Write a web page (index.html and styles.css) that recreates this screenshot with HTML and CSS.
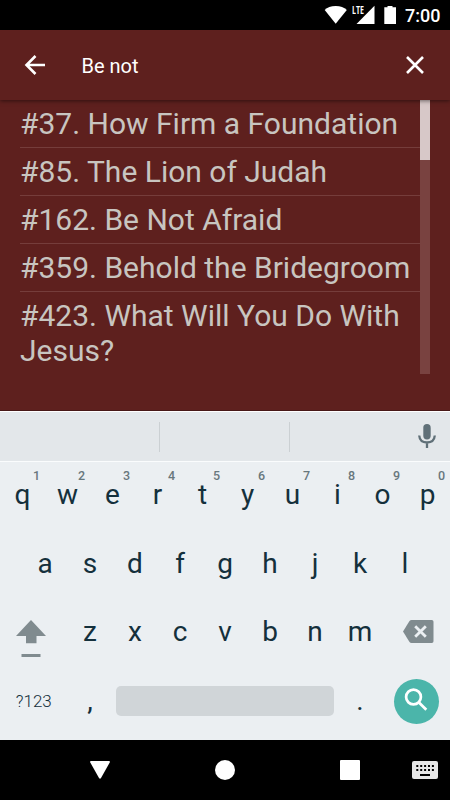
FILE: index.html
```html
<!DOCTYPE html>
<html lang="en">
<head>
<meta charset="utf-8">
<title>Hymn search</title>
<link rel="stylesheet" href="styles.css">
</head>
<body>
<div class="screen">
  <div class="status">
    <svg class="status-icons" viewBox="0 0 80 30" width="80" height="30">
      <path d="M4.700 10Q8.500 6 15.700 6Q22.800 6 26.800 10L15.700 23.700Z"/>
      <path d="M54.500 5.800V24H36.500Z"/>
      <path d="M67.500 7.300V6H72.500V7.300H76V24H64.300V7.300Z"/>
    </svg>
    <span class="lte">LTE</span>
    <span class="clock">7:00</span>
  </div>
  <header class="toolbar">
    <svg class="back" viewBox="0 0 22 22" width="22" height="22"><path d="M21 11H3M11.500 2L2.500 11L11.500 20"/></svg>
    <span class="query">Be not</span>
    <svg class="close" viewBox="0 0 20 20" width="20" height="20"><path d="M2 2L18 18M18 2L2 18"/></svg>
  </header>
  <main class="results">
    <ul class="list">
      <li>#37. How Firm a Foundation</li>
      <li>#85. The Lion of Judah</li>
      <li>#162. Be Not Afraid</li>
      <li>#359. Behold the Bridegroom</li>
      <li>#423. What Will You Do With Jesus?</li>
    </ul>
    <div class="scrollbar"><div class="thumb"></div></div>
  </main>
  <section class="keyboard">
    <div class="suggestions">
      <span class="slot"></span><span class="slot"></span><span class="slot-last"></span>
      <svg class="mic" viewBox="0 0 18 24" width="18" height="24"><rect x="5.300" y="0" width="7.400" height="15.500" rx="3.700"/><path d="M1.200 11.500Q1.800 18.500 9 18.500Q16.200 18.500 16.800 11.500M9 18.500V24"/></svg>
    </div>
    <div class="keys-area">
    <div class="row">
      <span class="key">q<sup>1</sup></span><span class="key">w<sup>2</sup></span><span class="key">e<sup>3</sup></span><span class="key">r<sup>4</sup></span><span class="key">t<sup>5</sup></span><span class="key">y<sup>6</sup></span><span class="key">u<sup>7</sup></span><span class="key">i<sup>8</sup></span><span class="key">o<sup>9</sup></span><span class="key">p<sup>0</sup></span>
    </div>
    <div class="row">
      <span class="key">a</span><span class="key">s</span><span class="key">d</span><span class="key">f</span><span class="key">g</span><span class="key">h</span><span class="key">j</span><span class="key">k</span><span class="key">l</span>
    </div>
    <div class="row">
      <span class="key wide"><svg class="shift" viewBox="0 0 30 38" width="30" height="38"><path d="M15 0L30 16H20.500V23.200H10V16H0ZM5.500 34H24.500V37H5.500Z"/></svg></span>
      <span class="key">z</span><span class="key">x</span><span class="key">c</span><span class="key">v</span><span class="key">b</span><span class="key">n</span><span class="key">m</span>
      <span class="key wide"><svg class="delete" viewBox="0 0 31 23" width="31" height="23"><path class="tag" d="M8.500 0H28.800Q30.500 0 30.500 1.700V21.300Q30.500 23 28.800 23H8.500Q7.300 23 6.500 22L0 11.500L6.500 1Q7.300 0 8.500 0Z"/><path class="cross" d="M12.200 6.200L22.800 16.800M22.800 6.200L12.200 16.800"/></svg></span>
    </div>
    <div class="row">
      <span class="key wide symbols">?123</span>
      <span class="key">,</span>
      <span class="space"></span>
      <span class="key">.</span>
      <span class="key wide"><span class="search"><svg viewBox="0 0 24 24" width="24" height="24"><circle cx="9.500" cy="9" r="7.400"/><path d="M14.700 14.200L22.300 21.800"/></svg></span></span>
    </div>
    </div>
  </section>
  <nav class="navbar">
    <svg class="nav-back" viewBox="0 0 20 18" width="20" height="18"><path d="M1 0H19Q20.500 .2 19.600 1.800L11 17Q10 18.600 9 17L.4 1.800Q-.5 .2 1 0Z"/></svg>
    <span class="nav-home"></span>
    <span class="nav-recent"></span>
    <svg class="nav-keyboard" viewBox="0 0 26 18" width="26" height="18"><rect class="case" width="26" height="18" rx="2"/><path class="dots" d="M4.300 5.100H22.200M4.300 9.100H22.200"/><path class="bar" d="M8 14H18"/></svg>
  </nav>
</div>
</body>
</html>
```
FILE: styles.css
```css
* { box-sizing: border-box; }
body { margin: 0; background: #000; font-family: Roboto, sans-serif; }
.screen { width: 450px; height: 800px; display: flex; flex-direction: column; overflow: hidden; }
svg { display: block; flex: none; }

.status { position: relative; height: 30px; flex: none; display: flex; justify-content: flex-end; background: #000; color: #fff; padding-right: 10px; }
.status-icons { fill: #fff; margin-right: 5px; }
.lte { position: absolute; left: 351.500px; top: 4px; font: bold 11px/11px "Open Sans", sans-serif; transform: scaleX(.64); transform-origin: left; }
.clock { width: 35px; font-size: 18px; font-weight: 500; line-height: 31px; white-space: nowrap; }

.toolbar { position: relative; z-index: 1; height: 70px; flex: none; display: flex; align-items: center; padding: 0 25px 0 24px; background: #5e201e; color: #fff; box-shadow: 0 1px 4px rgba(0,0,0,.5); }
.toolbar svg { fill: none; stroke: #fff; stroke-width: 2.600; }
.query { flex: 1; margin-left: 35.500px; font-size: 20px; line-height: 24px; padding-top: 1px; }

.results { height: 311px; flex: none; display: flex; padding: 0 20px; background: #5e201e; border-bottom: 1px solid #481817; }
.list { width: 400px; margin: 0; padding: 0; list-style: none; color: #c8c5c0; font-size: 30px; line-height: 35px; }
.list li { padding: 6px 0; border-bottom: 1px solid #753d3b; }
.list li:last-child { border-bottom: 0; }
.scrollbar { width: 10px; height: 274px; background: #794240; }
.thumb { height: 60px; background: #d7c8c8; }

.keyboard { height: 329px; flex: none; background: #ebeff2; color: #14303c; }
.suggestions { height: 51px; display: flex; align-items: center; padding-left: 30px; background: #e3e7ea; border-top: 1px solid #fff; border-bottom: 1px solid #fafcfd; }
.slot { width: 130px; height: 30px; border-right: 1px solid #cbd0d3; }
.slot-last { width: 128px; }
.mic { fill: #607078; margin-bottom: 1px; }
.mic path { fill: none; stroke: #607078; stroke-width: 2.300; }

.keys-area { margin-top: -.7px; }
.row { height: 68.500px; display: flex; justify-content: center; }
.key { position: relative; width: 45px; height: 68.500px; font-size: 28px; line-height: 68.500px; text-align: center; }
.key sup { position: absolute; right: 5px; top: 8px; font-size: 12.500px; font-weight: 500; line-height: 14px; color: #68777d; }
.wide { width: 67.500px; display: flex; justify-content: center; align-items: center; }
.shift { fill: #808b8f; margin: 12px 5px 0 0; }
.delete { margin: 0 0 1.500px 5px; }
.delete .tag { fill: #808b8f; }
.delete .cross { fill: none; stroke: #ebeff2; stroke-width: 2.800; }
.symbols { font-size: 17px; font-weight: 300; }
.space { width: 218px; height: 30px; margin: 19px 3.500px 0; border-radius: 5px; background: #d0d5d8; }
.search { width: 45px; height: 45px; border-radius: 50%; background: #4bb5aa; display: flex; align-items: center; justify-content: center; }
.search svg { fill: none; stroke: #fff; stroke-width: 2.700; margin-bottom: 2px; }

.navbar { height: 60px; flex: none; display: flex; align-items: center; padding-left: 90px; background: #000; }
.nav-back { fill: #fff; }
.nav-home { width: 20px; height: 20px; margin-left: 105px; border-radius: 50%; background: #fff; }
.nav-recent { width: 20px; height: 20px; margin-left: 105px; border-radius: 1px; background: #fff; }
.nav-keyboard { margin-left: 52px; }
.case { fill: #e6e6e6; }
.dots { stroke: #000; stroke-width: 2; stroke-dasharray: 2 1.900; }
.bar { stroke: #000; stroke-width: 2; }
```
